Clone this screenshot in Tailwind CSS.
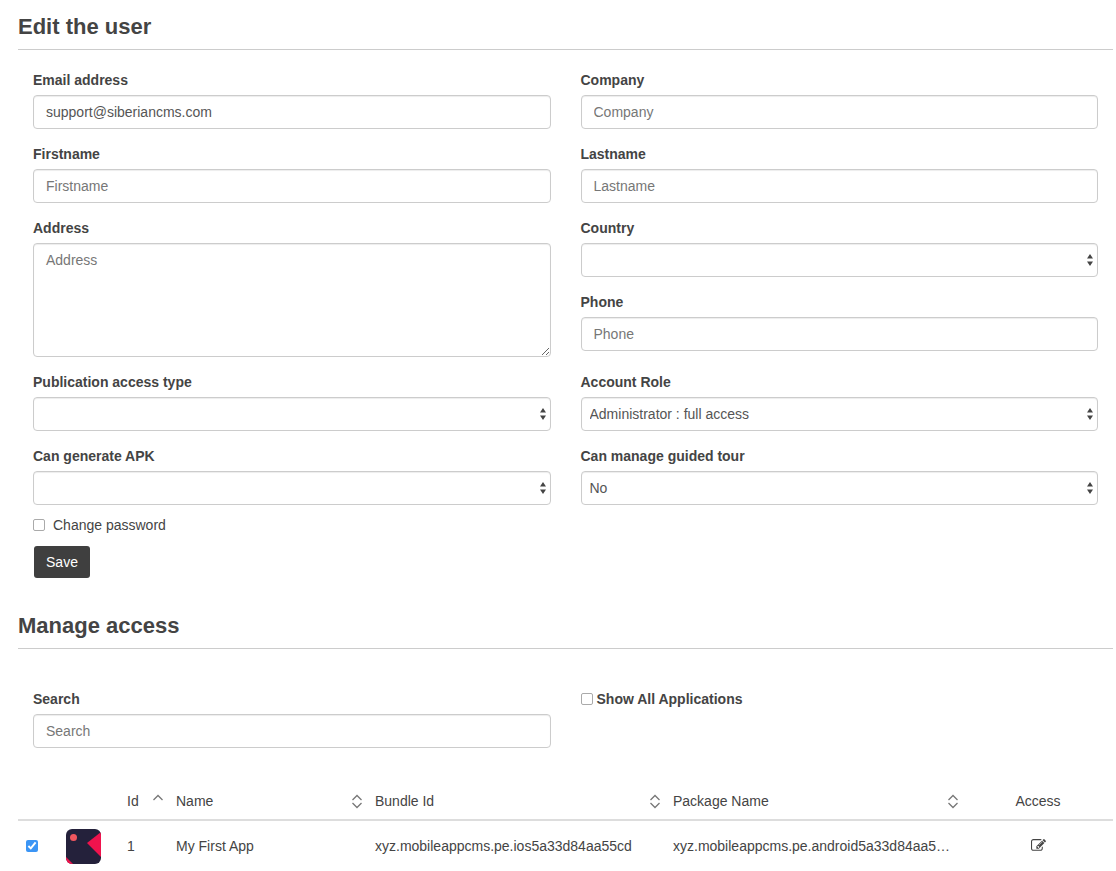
<!DOCTYPE html>
<html lang="en">
<head>
    <meta charset="UTF-8">
    <title>Edit the user</title>
    <script src="https://cdn.jsdelivr.net/npm/@tailwindcss/browser@4"></script>
</head>
<body class="h-[871px] overflow-hidden bg-white font-['Liberation_Sans',Arial,sans-serif] text-sm leading-5 text-[#444]">
    <div class="ml-[18px] mr-[3px]">
        <!-- Edit form -->
        <h2 class="h-[50px] border-b border-[#ccc] pt-[14px] text-[22px] leading-[26px] font-bold text-[#444]">Edit the user</h2>
        <form class="grid grid-cols-2 pt-5">
            <div class="flex flex-col gap-[15px] pl-[15px] pr-[15px]">
                <div>
                    <label class="mb-[5px] block font-bold">Email address</label>
                    <input type="text" value="support@siberiancms.com" class="block h-[34px] w-full rounded border border-[#ccc] px-3 text-sm text-[#555] shadow-[inset_0_1px_1px_rgba(0,0,0,0.075)] outline-none">
                </div>
                <div>
                    <label class="mb-[5px] block font-bold">Firstname</label>
                    <input type="text" placeholder="Firstname" class="block h-[34px] w-full rounded border border-[#ccc] px-3 text-sm shadow-[inset_0_1px_1px_rgba(0,0,0,0.075)] outline-none placeholder:text-[#777]">
                </div>
                <div>
                    <label class="mb-[5px] block font-bold">Address</label>
                    <textarea placeholder="Address" class="block h-[114px] w-full rounded border border-[#ccc] px-3 py-1.5 text-sm shadow-[inset_0_1px_1px_rgba(0,0,0,0.075)] outline-none placeholder:text-[#777]"></textarea>
                </div>
                <div>
                    <label class="mb-[5px] block font-bold">Publication access type</label>
                    <div class="relative">
                        <select class="block h-[34px] w-full appearance-none rounded border border-[#ccc] bg-white px-2 text-sm text-[#555] shadow-[inset_0_1px_1px_rgba(0,0,0,0.075)] outline-none"><option></option></select>
                        <svg class="absolute right-[5px] top-[11px] h-3 w-[6px]" viewBox="0 0 6 12" fill="#444"><path d="M3 0L6 4.500H0zM3 12L0 7.500h6z"/></svg>
                    </div>
                </div>
                <div>
                    <label class="mb-[5px] block font-bold">Can generate APK</label>
                    <div class="relative">
                        <select class="block h-[34px] w-full appearance-none rounded border border-[#ccc] bg-white px-2 text-sm text-[#555] shadow-[inset_0_1px_1px_rgba(0,0,0,0.075)] outline-none"><option></option></select>
                        <svg class="absolute right-[5px] top-[11px] h-3 w-[6px]" viewBox="0 0 6 12" fill="#444"><path d="M3 0L6 4.500H0zM3 12L0 7.500h6z"/></svg>
                    </div>
                </div>
                <div class="-mt-[5px]">
                    <label class="flex h-5 items-center gap-2"><input type="checkbox" class="m-0 size-3 appearance-none rounded-[2px] border border-[#aaa] bg-white"> Change password</label>
                    <button type="button" class="ml-px mt-[11px] block h-8 w-[56px] rounded-[3px] bg-[#3f3f3f] text-sm text-white">Save</button>
                </div>
            </div>
            <div class="flex flex-col gap-[15px] pl-[15px] pr-[15px]">
                <div>
                    <label class="mb-[5px] block font-bold">Company</label>
                    <input type="text" placeholder="Company" class="block h-[34px] w-full rounded border border-[#ccc] px-3 text-sm shadow-[inset_0_1px_1px_rgba(0,0,0,0.075)] outline-none placeholder:text-[#777]">
                </div>
                <div>
                    <label class="mb-[5px] block font-bold">Lastname</label>
                    <input type="text" placeholder="Lastname" class="block h-[34px] w-full rounded border border-[#ccc] px-3 text-sm shadow-[inset_0_1px_1px_rgba(0,0,0,0.075)] outline-none placeholder:text-[#777]">
                </div>
                <div>
                    <label class="mb-[5px] block font-bold">Country</label>
                    <div class="relative">
                        <select class="block h-[34px] w-full appearance-none rounded border border-[#ccc] bg-white px-2 text-sm text-[#555] shadow-[inset_0_1px_1px_rgba(0,0,0,0.075)] outline-none"><option></option></select>
                        <svg class="absolute right-[5px] top-[11px] h-3 w-[6px]" viewBox="0 0 6 12" fill="#444"><path d="M3 0L6 4.500H0zM3 12L0 7.500h6z"/></svg>
                    </div>
                </div>
                <div>
                    <label class="mb-[5px] block font-bold">Phone</label>
                    <input type="text" placeholder="Phone" class="block h-[34px] w-full rounded border border-[#ccc] px-3 text-sm shadow-[inset_0_1px_1px_rgba(0,0,0,0.075)] outline-none placeholder:text-[#777]">
                </div>
                <div class="mt-[6px]">
                    <label class="mb-[5px] block font-bold">Account Role</label>
                    <div class="relative">
                        <select class="block h-[34px] w-full appearance-none rounded border border-[#ccc] bg-white px-2 text-sm text-[#555] shadow-[inset_0_1px_1px_rgba(0,0,0,0.075)] outline-none"><option>Administrator : full access</option></select>
                        <svg class="absolute right-[5px] top-[11px] h-3 w-[6px]" viewBox="0 0 6 12" fill="#444"><path d="M3 0L6 4.500H0zM3 12L0 7.500h6z"/></svg>
                    </div>
                </div>
                <div>
                    <label class="mb-[5px] block font-bold">Can manage guided tour</label>
                    <div class="relative">
                        <select class="block h-[34px] w-full appearance-none rounded border border-[#ccc] bg-white px-2 text-sm text-[#555] shadow-[inset_0_1px_1px_rgba(0,0,0,0.075)] outline-none"><option>No</option></select>
                        <svg class="absolute right-[5px] top-[11px] h-3 w-[6px]" viewBox="0 0 6 12" fill="#444"><path d="M3 0L6 4.500H0zM3 12L0 7.500h6z"/></svg>
                    </div>
                </div>
            </div>
        </form>

        <!-- Manage access -->
        <h2 class="mt-[35px] h-[36px] border-b border-[#ccc] text-[22px] leading-[26px] font-bold text-[#444]">Manage access</h2>
        <div class="grid grid-cols-2 pt-10">
            <div class="px-[15px]">
                <label class="mb-[5px] block font-bold">Search</label>
                <input type="text" placeholder="Search" class="block h-[34px] w-full rounded border border-[#ccc] px-3 text-sm shadow-[inset_0_1px_1px_rgba(0,0,0,0.075)] outline-none placeholder:text-[#777]">
            </div>
            <div class="px-[15px]">
                <label class="flex h-5 items-center gap-1 font-bold"><input type="checkbox" class="m-0 size-3 appearance-none rounded-[2px] border border-[#aaa] bg-white"> Show All Applications</label>
            </div>
        </div>

        <table class="mt-[33px] w-full table-fixed border-collapse">
            <thead>
                <tr class="h-[39px] border-b-2 border-[#ddd] text-left">
                    <th class="w-10"></th>
                    <th class="w-[61px]"></th>
                    <th class="w-[49px] pl-2 pr-[5px] pt-[2px] font-normal">
                        <div class="flex items-center justify-between">Id
                            <svg class="h-[15px] w-[10px]" viewBox="0 0 10 15" fill="none" stroke="#777" stroke-width="1.300"><path d="M.5 6L5 1.500 9.500 6"/></svg>
                        </div>
                    </th>
                    <th class="w-[199px] pl-2 pr-[5px] pt-[2px] font-normal">
                        <div class="flex items-center justify-between">Name
                            <svg class="h-[15px] w-[10px]" viewBox="0 0 10 15" fill="none" stroke="#777" stroke-width="1.300"><path d="M.5 6L5 1.500 9.500 6M.5 9L5 13.500 9.500 9"/></svg>
                        </div>
                    </th>
                    <th class="w-[298px] pl-2 pr-[5px] pt-[2px] font-normal">
                        <div class="flex items-center justify-between">Bundle Id
                            <svg class="h-[15px] w-[10px]" viewBox="0 0 10 15" fill="none" stroke="#777" stroke-width="1.300"><path d="M.5 6L5 1.500 9.500 6M.5 9L5 13.500 9.500 9"/></svg>
                        </div>
                    </th>
                    <th class="w-[298px] pl-2 pr-[5px] pt-[2px] font-normal">
                        <div class="flex items-center justify-between">Package Name
                            <svg class="h-[15px] w-[10px]" viewBox="0 0 10 15" fill="none" stroke="#777" stroke-width="1.300"><path d="M.5 6L5 1.500 9.500 6M.5 9L5 13.500 9.500 9"/></svg>
                        </div>
                    </th>
                    <th class="pt-[2px] text-center font-normal">Access</th>
                </tr>
            </thead>
            <tbody>
                <tr class="h-[50px]">
                    <td class="pl-2"><input type="checkbox" checked class="m-0 mt-px block size-3 accent-[#3b95f5]"></td>
                    <td class="pl-2">
                        <svg class="mt-px block size-[35px]" viewBox="0 0 35 35">
                            <clipPath id="appIcon"><rect width="35" height="35" rx="6"/></clipPath>
                            <g clip-path="url(#appIcon)">
                                <rect width="35" height="35" fill="#24213b"/>
                                <path d="M35 3L21 14 35 28z" fill="#f0134d"/>
                                <path d="M0 28L7 35H0z" fill="#f0134d"/>
                                <circle cx="7.500" cy="8.500" r="3.500" fill="#f2575f"/>
                            </g>
                        </svg>
                    </td>
                    <td class="pl-2">1</td>
                    <td class="pl-2">My First App</td>
                    <td class="truncate pl-2">xyz.mobileappcms.pe.ios5a33d84aa55cd</td>
                    <td class="truncate pl-2 pr-[9px]">xyz.mobileappcms.pe.android5a33d84aa55cd</td>
                    <td>
                        <svg class="mx-auto block size-[15px]" viewBox="0 0 1792 1792" fill="#444"><path d="M888 1184l116-116-152-152-116 116v56h96v96h56zm440-720q-16-16-33 1l-350 350q-17 17-1 33t33-1l350-350q17-17 1-33zm80 594v190q0 119-84.500 203.500t-203.500 84.500h-832q-119 0-203.500-84.500t-84.500-203.500v-832q0-119 84.500-203.500t203.500-84.500h832q63 0 117 25 15 7 18 23 3 17-9 29l-49 49q-14 14-32 8-23-6-45-6h-832q-66 0-113 47t-47 113v832q0 66 47 113t113 47h832q66 0 113-47t47-113v-126q0-13 9-22l64-64q15-15 35-7t20 29zm-96-738l288 288-672 672h-288v-288zm444 132l-92 92-288-288 92-92q28-28 68-28t68 28l152 152q28 28 28 68t-28 68z"/></svg>
                    </td>
                </tr>
            </tbody>
        </table>
    </div>
</body>
</html>
